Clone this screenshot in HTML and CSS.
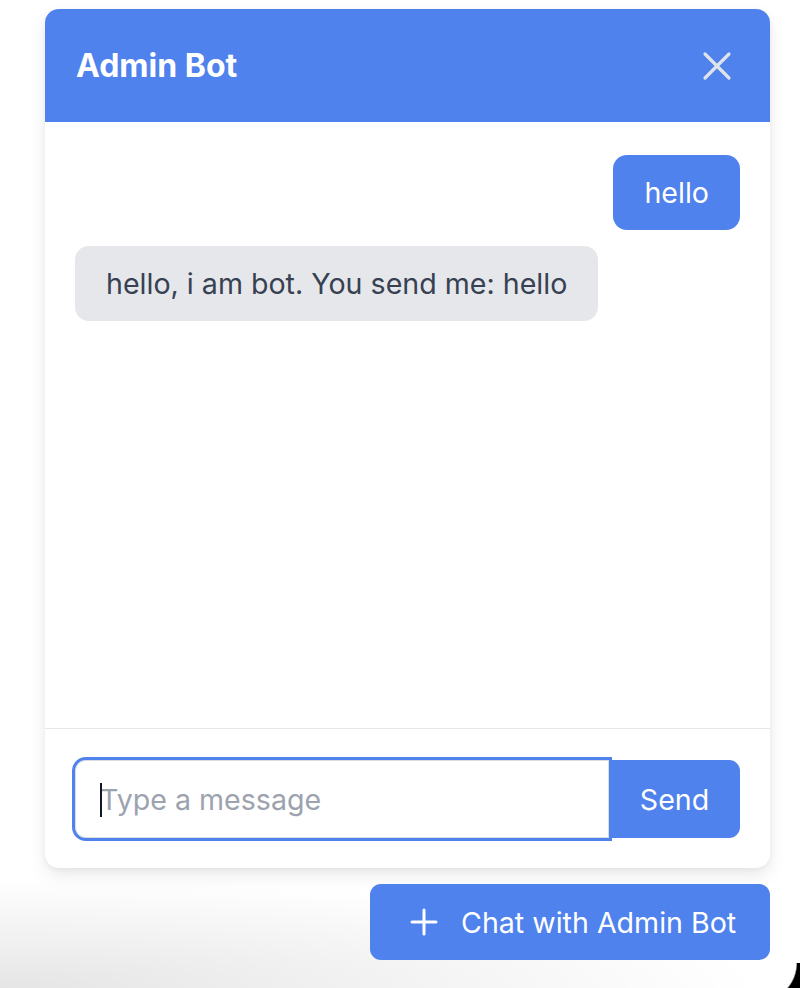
FILE: index.html
```html
<!DOCTYPE html>
<html lang="en">
<head>
    <meta charset="UTF-8">
    <meta name="viewport" content="width=device-width, initial-scale=1.0">
    <title>Admin Bot</title>
    <link rel="stylesheet" href="styles.css">
</head>
<body>
    <div class="widget">
      <section class="chat">
        <header class="chat-header">
          <h2>Admin Bot</h2>
          <button class="close-btn" type="button" aria-label="Close">
            <svg width="30" height="30" viewBox="0 0 30 30">
              <path d="M3 3 L27 27 M27 3 L3 27" stroke="currentColor" stroke-width="3.2" stroke-linecap="round"/>
            </svg>
          </button>
        </header>

        <div class="messages">
          <div class="msg user">hello</div>
          <div class="msg bot">hello, i am bot. You send me: hello</div>
        </div>

        <form class="composer" onsubmit="return false;">
          <div class="field">
            <input type="text" placeholder="Type a message">
            <span class="caret"></span>
          </div>
          <button type="submit" class="send-btn">Send</button>
        </form>
      </section>

      <button class="launcher" type="button">
        <svg width="28" height="28" viewBox="0 0 28 28">
          <path d="M14 2 V26 M2 14 H26" stroke="currentColor" stroke-width="3" stroke-linecap="round"/>
        </svg>
        <span>Chat with Admin Bot</span>
      </button>
    </div>

    <!-- window corner of the screenshot -->
    <div class="corner"></div>
</body>
</html>
```

FILE: styles.css
```css
html, body {
    margin: 0;
    height: 100%;
}
body {
    font-family: "Inter", "Noto Sans", sans-serif;
    background:
        radial-gradient(ellipse 760px 110px at 0% 100%, rgba(0, 0, 0, 0.1), rgba(0, 0, 0, 0) 100%),
        #fff;
    position: relative;
    overflow: hidden;
}
.widget {
    display: flex;
    flex-direction: column;
    width: 725px;
    margin-left: 45px;
    padding-top: 9px;
}
.chat {
    display: flex;
    flex-direction: column;
    height: 859px;
    background-color: #fff;
    border-radius: 14px;
    box-shadow: 0 8px 18px rgba(0, 0, 0, 0.08), 0 2px 6px rgba(0, 0, 0, 0.05);
    overflow: hidden;
}
.chat-header {
    height: 113px;
    box-sizing: border-box;
    padding: 0 38px 0 31px;
    background-color: #4f82ed;
    display: flex;
    align-items: center;
    justify-content: space-between;
}
.chat-header h2 {
    margin: 0;
    color: #fff;
    font-size: 32px;
    font-weight: 700;
}
.close-btn {
    background: none;
    border: none;
    padding: 0;
    color: #dfe3ea;
    display: flex;
    cursor: pointer;
}
.messages {
    flex: 1;
    padding: 33px 30px;
    display: flex;
    flex-direction: column;
    gap: 16px;
}
.msg {
    padding: 17px 31px 16px;
    font-size: 28.6px;
    line-height: 42px;
    border-radius: 14px;
}
.msg.user {
    align-self: flex-end;
    background-color: #4f82ed;
    color: #fff;
}
.msg.bot {
    align-self: flex-start;
    background-color: #e5e7eb;
    color: #374151;
}
.composer {
    border-top: 1px solid #e5e7eb;
    padding: 31px 30px 30px;
    display: flex;
}
.field {
    flex: 1;
    position: relative;
    display: flex;
}
.field input {
    flex: 1;
    height: 78px;
    box-sizing: border-box;
    padding: 0 24px;
    border: 1px solid #d9dce1;
    border-radius: 11px 0 0 11px;
    outline: 3px solid #4f82ed;
    font-family: inherit;
    font-size: 28.6px;
    color: #111827;
}
.field input::placeholder {
    color: #9ca3af;
}
.caret {
    position: absolute;
    left: 25px;
    top: 23px;
    width: 2px;
    height: 34px;
    background-color: #111827;
}
.send-btn {
    width: 131px;
    height: 78px;
    border: none;
    border-radius: 0 11px 11px 0;
    background-color: #4f82ed;
    color: #fff;
    font-family: inherit;
    font-size: 28.6px;
    cursor: pointer;
}
.launcher {
    align-self: flex-end;
    margin-top: 16px;
    width: 400px;
    height: 76px;
    padding: 0 0 0 40px;
    border: none;
    border-radius: 11px;
    background-color: #4f82ed;
    color: #fff;
    font-family: inherit;
    font-size: 28.6px;
    display: flex;
    align-items: center;
    gap: 23px;
    cursor: pointer;
}
.corner {
    position: absolute;
    right: 0;
    bottom: 0;
    width: 42px;
    height: 25px;
    background: radial-gradient(circle 39px at 0 0, rgba(0, 0, 0, 0) 38px, #000 39.5px);
}
```
